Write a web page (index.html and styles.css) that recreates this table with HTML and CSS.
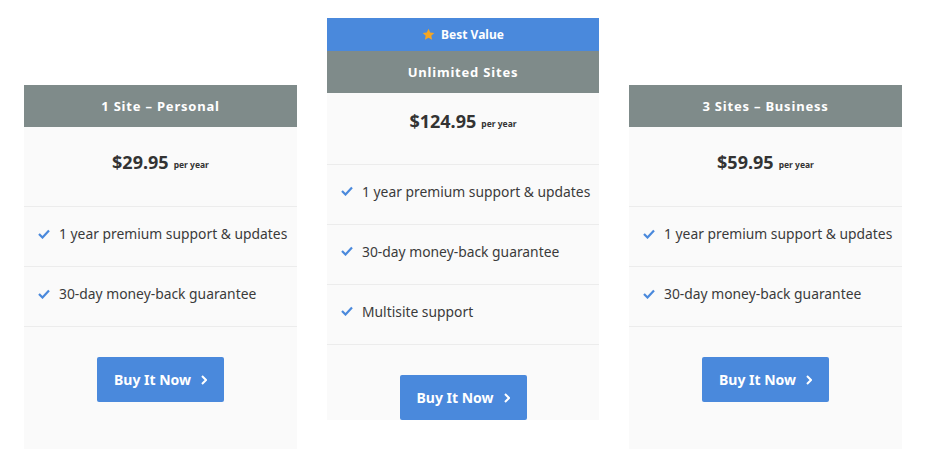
FILE: index.html
```html
<!DOCTYPE html>
<html>
<head>
<meta charset="utf-8">
<link rel="stylesheet" href="styles.css">
</head>
<body>
<div class="plans">
  <div class="card side">
    <div class="title">1 Site – Personal</div>
    <div class="price"><span class="amount">$29.95</span> <span class="per">per year</span></div>
    <ul class="features">
      <li><svg class="check" viewBox="0 0 12 10"><polyline points="1,5 4.5,8.5 11,1.5"/></svg>1 year premium support &amp; updates</li>
      <li><svg class="check" viewBox="0 0 12 10"><polyline points="1,5 4.5,8.5 11,1.5"/></svg>30-day money-back guarantee</li>
    </ul>
    <div class="action"><a class="buy" href="#">Buy It Now <svg class="chev" viewBox="0 0 6 10"><polyline points="1,1 5,5 1,9"/></svg></a></div>
  </div>
  <div class="card featured">
    <div class="badge"><svg class="star" viewBox="0 0 24 24"><path d="M12 1.5l3.2 6.9 7.5.9-5.5 5.2 1.4 7.4L12 18.2l-6.6 3.7 1.4-7.4-5.5-5.2 7.5-.9z"/></svg>Best Value</div>
    <div class="title">Unlimited Sites</div>
    <div class="price"><span class="amount">$124.95</span> <span class="per">per year</span></div>
    <ul class="features">
      <li><svg class="check" viewBox="0 0 12 10"><polyline points="1,5 4.5,8.5 11,1.5"/></svg>1 year premium support &amp; updates</li>
      <li><svg class="check" viewBox="0 0 12 10"><polyline points="1,5 4.5,8.5 11,1.5"/></svg>30-day money-back guarantee</li>
      <li><svg class="check" viewBox="0 0 12 10"><polyline points="1,5 4.5,8.5 11,1.5"/></svg>Multisite support</li>
    </ul>
    <div class="action"><a class="buy" href="#">Buy It Now <svg class="chev" viewBox="0 0 6 10"><polyline points="1,1 5,5 1,9"/></svg></a></div>
  </div>
  <div class="card side">
    <div class="title">3 Sites – Business</div>
    <div class="price"><span class="amount">$59.95</span> <span class="per">per year</span></div>
    <ul class="features">
      <li><svg class="check" viewBox="0 0 12 10"><polyline points="1,5 4.5,8.5 11,1.5"/></svg>1 year premium support &amp; updates</li>
      <li><svg class="check" viewBox="0 0 12 10"><polyline points="1,5 4.5,8.5 11,1.5"/></svg>30-day money-back guarantee</li>
    </ul>
    <div class="action"><a class="buy" href="#">Buy It Now <svg class="chev" viewBox="0 0 6 10"><polyline points="1,1 5,5 1,9"/></svg></a></div>
  </div>
</div>
</body>
</html>
```
FILE: styles.css
```css
html, body {
  margin: 0;
  padding: 0;
  background: #ffffff;
  font-family: "Noto Sans", "Open Sans", sans-serif;
  color: #3a3a3a;
  overflow: hidden;
}
.plans {
  display: flex;
  align-items: flex-start;
  gap: 30px;
  padding: 18px 0 0 24px;
}
.card {
  width: 273px;
  background: #fafafa;
  display: flex;
  flex-direction: column;
}
.card.featured {
  width: 272px;
}
.card.side {
  margin-top: 67px;
  padding-bottom: 60px;
}
.badge {
  height: 33px;
  background: #4a89dc;
  color: #fff;
  font-weight: 700;
  font-size: 12px;
  display: flex;
  align-items: center;
  justify-content: center;
  gap: 6px;
}
.star {
  width: 13px;
  height: 13px;
  fill: #f5a623;
}
.title {
  height: 42px;
  background: #7f8b8a;
  color: #fff;
  font-weight: 700;
  font-size: 13px;
  letter-spacing: 0.8px;
  display: flex;
  align-items: center;
  justify-content: center;
}
.price {
  height: 80px;
  padding-bottom: 10px;
  box-sizing: border-box;
  display: flex;
  align-items: center;
  justify-content: center;
  border-bottom: 1px solid #ececec;
  gap: 5px;
}
.featured .price {
  height: 72px;
  padding-bottom: 16px;
}
.amount {
  font-weight: 700;
  font-size: 18px;
  color: #333;
}
.per {
  font-weight: 700;
  font-size: 8.5px;
  margin-top: 5px;
  color: #333;
}
.features {
  list-style: none;
  margin: 0;
  padding: 0;
}
.features li {
  height: 53px;
  padding-bottom: 6px;
  border-bottom: 1px solid #ececec;
  display: flex;
  align-items: center;
  padding-left: 14px;
  font-size: 13.85px;
  color: #3a3a3a;
}
.featured .features li {
  height: 52px;
  padding-bottom: 7px;
}
.check {
  width: 12px;
  height: 10px;
  margin-right: 9px;
  fill: none;
  stroke: #4a89dc;
  stroke-width: 2.2;
  flex: none;
}
.action {
  display: flex;
  justify-content: center;
  padding-top: 30px;
}
.buy {
  width: 127px;
  height: 45px;
  box-sizing: border-box;
  background: #4a89dc;
  border-radius: 2px;
  color: #fff;
  text-decoration: none;
  font-weight: 700;
  font-size: 14px;
  display: flex;
  align-items: center;
  justify-content: center;
  gap: 10px;
}
.chev {
  width: 6px;
  height: 10px;
  fill: none;
  stroke: #fff;
  stroke-width: 2;
}
```
